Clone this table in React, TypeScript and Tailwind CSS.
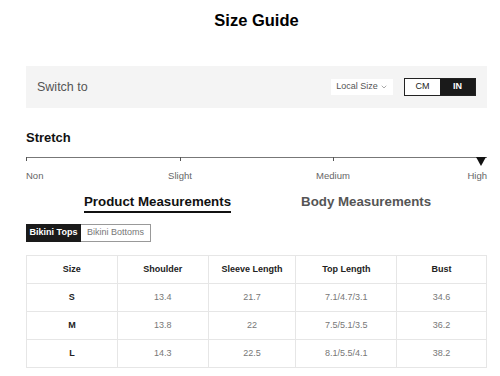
import React from 'react';
import { ChevronDown } from 'lucide-react';

const rows = [
  ['S', '13.4', '21.7', '7.1/4.7/3.1', '34.6'],
  ['M', '13.8', '22', '7.5/5.1/3.5', '36.2'],
  ['L', '14.3', '22.5', '8.1/5.5/4.1', '38.2'],
];

const headers = ['Size', 'Shoulder', 'Sleeve Length', 'Top Length', 'Bust'];
const colWidths = ['w-[91px]', 'w-[91px]', 'w-[88px]', 'w-[101px]', 'w-[90px]'];

export default function App() {
  return (
    <div className="w-[500px] h-[376px] bg-white overflow-hidden font-['Liberation_Sans',Arial,sans-serif]">
      <div className="ml-[26px] w-[461px]">
        <h1 className="pt-[11px] text-center text-[16.5px] font-bold leading-[18px] text-black">Size Guide</h1>

        {/* unit switcher */}
        <div className="mt-[37px] h-[42px] bg-[#f4f4f4] flex items-center pl-[11px] pr-[11px]">
          <span className="text-[12.5px] text-[#555]">Switch to</span>
          <div className="ml-auto flex items-center">
            <div className="h-[16px] w-[62px] bg-white flex items-center justify-center gap-[2px] text-[9px] text-[#555]">
              Local Size <ChevronDown size={8} strokeWidth={1.5} />
            </div>
            <div className="ml-[11px] flex h-[18px] border border-[#222] text-[9px] font-bold">
              <div className="w-[35px] bg-white text-[#222] flex items-center justify-center font-normal">CM</div>
              <div className="w-[35px] bg-[#1a1a1a] text-white flex items-center justify-center">IN</div>
            </div>
          </div>
        </div>

        {/* stretch */}
        <div className="mt-[22px] text-[13px] font-bold leading-[16px] text-[#111]">Stretch</div>
        <div className="relative mt-[11px] h-[10px]">
          <div className="h-[1px] bg-[#777]" />
          <div className="absolute left-0 top-0 h-[4px] w-[1px] bg-[#555]" />
          <div className="absolute left-[154px] top-0 h-[4px] w-[1px] bg-[#555]" />
          <div className="absolute left-[307px] top-0 h-[4px] w-[1px] bg-[#555]" />
          <svg className="absolute right-[1px] top-0" width="10" height="9" viewBox="0 0 10 9">
            <path d="M0 0 H10 L5 9 Z" fill="#111" />
          </svg>
        </div>
        <div className="relative mt-[3px] h-[12px] text-[9.5px] text-[#666] leading-[12px]">
          <span className="absolute left-0">Non</span>
          <span className="absolute left-[134px] w-[40px] text-center">Slight</span>
          <span className="absolute left-[282px] w-[50px] text-center">Medium</span>
          <span className="absolute right-0">High</span>
        </div>

        {/* tabs */}
        <div className="mt-[12px] flex text-[13.3px] font-bold leading-[16px]">
          <div className="ml-[58px] border-b-2 border-[#111] pb-[1px] text-[#111]">Product Measurements</div>
          <div className="ml-[70px] text-[#555]">Body Measurements</div>
        </div>

        <div className="mt-[11px] flex h-[18px] text-[9px]">
          <div className="w-[55px] bg-[#1a1a1a] text-white font-bold flex items-center justify-center">Bikini Tops</div>
          <div className="w-[70px] border border-[#999] border-l-0 text-[#777] flex items-center justify-center">Bikini Bottoms</div>
        </div>

        {/* table */}
        <table className="mt-[13px] w-[461px] border-collapse text-[9px]">
          <thead>
            <tr className="h-[28px]">
              {headers.map((h, i) => (
                <th key={h} className={`${colWidths[i]} border border-[#e6e6e6] font-bold text-[#222] text-center`}>{h}</th>
              ))}
            </tr>
          </thead>
          <tbody>
            {rows.map((r) => (
              <tr key={r[0]} className="h-[28px]">
                {r.map((c, i) => (
                  <td
                    key={i}
                    className={`border border-[#e6e6e6] text-center ${i === 0 ? 'font-bold text-[#222]' : 'text-[#777]'}`}
                  >
                    {c}
                  </td>
                ))}
              </tr>
            ))}
          </tbody>
        </table>
      </div>
    </div>
  );
}
